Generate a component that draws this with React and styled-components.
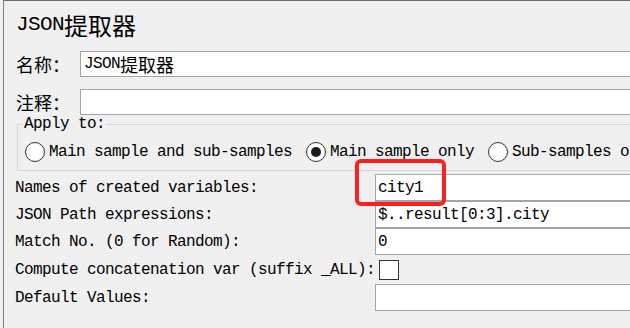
import React from "react";
import styled, { createGlobalStyle } from "styled-components";

const Global = createGlobalStyle`
  html, body {
    margin: 0;
    padding: 0;
    background: #f0f0f0;
    overflow: hidden;
  }
  body {
    width: 630px;
    height: 328px;
  }
`;

const Frame = styled.div`
  position: relative;
  margin-left: 3px;
  width: 720px;
  height: 327px;
  border-top: 1px solid #6b6b6b;
  border-left: 1px solid #7d7d7d;
  padding-left: 12px;
  font-family: "Liberation Mono", "Noto Sans CJK SC", monospace;
  font-size: 16px;
  letter-spacing: -0.6px;
  color: #000;
  white-space: nowrap;
`;

const Title = styled.div`
  display: flex;
  align-items: center;
  height: 46px;
  margin-bottom: 4px;
  font-size: 21px;
`;

const Cjk = styled.span`
  font-family: "Noto Sans CJK SC", sans-serif;
  font-size: ${(p) => p.$size || 18}px;
  letter-spacing: 0;
`;

const FieldRow = styled.div`
  display: flex;
  align-items: center;
  height: 26px;
  & + & {
    margin-top: 12px;
  }
`;

const FieldLabel = styled.div`
  flex: none;
  width: 64px;
`;

const TextBox = styled.div`
  flex: 1;
  box-sizing: border-box;
  height: ${(p) => p.$h || 26}px;
  background: #fff;
  border: 1px solid #a5a5a5;
  display: flex;
  align-items: center;
  padding-left: ${(p) => p.$pad ?? 3}px;
`;

const Group = styled.fieldset`
  margin: 0 0 0 1px;
  padding: 0 0 8px 7px;
  border: 1px solid #d6d6d6;
  min-width: 0;
`;

const GroupTitle = styled.legend`
  padding: 0 1px;
  margin-left: -2px;
  height: 18px;
  line-height: 18px;
`;

const RadioRow = styled.div`
  display: flex;
  align-items: center;
  height: 20px;
  margin-top: 9px;
`;

const Option = styled.div`
  display: flex;
  align-items: center;
  gap: 4px;
  & + & {
    margin-left: 14px;
  }
`;

const RadioCircle = styled.span`
  box-sizing: border-box;
  width: 20px;
  height: 20px;
  border-radius: 50%;
  border: 1px solid #333;
  background: #fff;
  display: grid;
  place-items: center;
  &::after {
    content: "";
    display: ${(p) => (p.$checked ? "block" : "none")};
    width: 10px;
    height: 10px;
    border-radius: 50%;
    background: #1c1c1c;
  }
`;

const Params = styled.div`
  display: grid;
  grid-template-columns: 360px 1fr;
  grid-template-rows: 27px 27px 27px 29px 27px;
  align-items: center;
  margin: 3px 0 0 -1px;
`;

const ParamLabel = styled.div``;

const CheckCell = styled.div`
  display: flex;
  align-items: center;
`;

const CheckBox = styled.span`
  display: block;
  box-sizing: border-box;
  width: 20px;
  height: 20px;
  margin-left: 4px;
  border: 1px solid #333;
  background: #fff;
`;

const Highlight = styled.div`
  position: absolute;
  left: 351px;
  top: 158px;
  width: 91px;
  height: 47px;
  box-sizing: border-box;
  border: 4px solid #fe2020;
  border-radius: 6px;
  pointer-events: none;
`;

const options = [
  { label: "Main sample and sub-samples", checked: false },
  { label: "Main sample only", checked: true },
  { label: "Sub-samples only", checked: false },
];

export default function App() {
  return (
    <>
      <Global />
      <Frame>
        <Title>
          JSON<Cjk $size={24}>提取器</Cjk>
        </Title>
        <FieldRow>
          <FieldLabel>
            <Cjk>名称：</Cjk>
          </FieldLabel>
          <TextBox>
            JSON<Cjk>提取器</Cjk>
          </TextBox>
        </FieldRow>
        <FieldRow>
          <FieldLabel>
            <Cjk>注释：</Cjk>
          </FieldLabel>
          <TextBox />
        </FieldRow>
        <Group>
          <GroupTitle>Apply to:</GroupTitle>
          <RadioRow>
            {options.map((o) => (
              <Option key={o.label}>
                <RadioCircle $checked={o.checked} />
                <span>{o.label}</span>
              </Option>
            ))}
          </RadioRow>
        </Group>
        <Params>
          <ParamLabel>Names of created variables:</ParamLabel>
          <TextBox $h={27} $pad={2}>city1</TextBox>
          <ParamLabel>JSON Path expressions:</ParamLabel>
          <TextBox $h={27} $pad={2}>$..result[0:3].city</TextBox>
          <ParamLabel>Match No. (0 for Random):</ParamLabel>
          <TextBox $h={27} $pad={2}>0</TextBox>
          <ParamLabel>Compute concatenation var (suffix _ALL):</ParamLabel>
          <CheckCell>
            <CheckBox />
          </CheckCell>
          <ParamLabel>Default Values:</ParamLabel>
          <TextBox $h={27} $pad={2} />
        </Params>
        <Highlight />
      </Frame>
    </>
  );
}
